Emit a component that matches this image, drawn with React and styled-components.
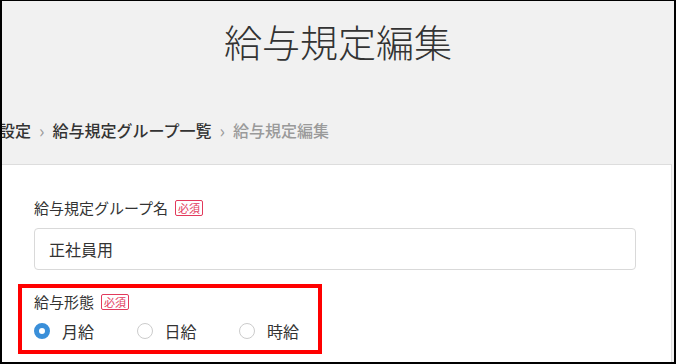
import React from 'react';
import styled, { createGlobalStyle } from 'styled-components';

const GlobalStyle = createGlobalStyle`
  * {
    box-sizing: border-box;
  }

  body {
    margin: 0;
    font-family: "Noto Sans CJK JP", "Noto Sans", sans-serif;
    color: #333333;
  }
`;

const Frame = styled.div`
  width: 676px;
  height: 364px;
  overflow: hidden;
  border-style: solid;
  border-color: #000000;
  border-width: 1px 2px 2px 2px;
  background-color: #f1f1f1;
`;

const Header = styled.header`
  padding: 16px 0 22px;
`;

const Title = styled.h1`
  margin: 0;
  font-size: 38px;
  line-height: 48px;
  font-weight: 300;
  text-align: center;
  color: #333333;
`;

const Breadcrumb = styled.nav`
  display: flex;
  align-items: center;
  gap: 8px;
  margin: 53px 0 0 -3px;
  font-size: 16px;
  line-height: 24px;
  font-weight: 500;
  white-space: nowrap;
`;

const Crumb = styled.span`
  color: ${(props) => (props.current ? '#9a9a9a' : '#333333')};
`;

const Separator = styled.span`
  color: #9a9a9a;
  font-size: 18px;
  font-weight: 400;
`;

const Card = styled.section`
  margin: 0 2px 0 -20px;
  padding: 33px 35px 0 52px;
  height: 240px;
  background-color: #ffffff;
  border-top: 1px solid #dddddd;
  border-right: 1px solid #dddddd;
`;

const Label = styled.div`
  display: flex;
  align-items: center;
  gap: 7px;
  font-size: 15px;
  line-height: 20px;
  color: #333333;
`;

const RequiredBadge = styled.span`
  display: inline-flex;
  align-items: center;
  height: 16px;
  padding: 0 2px;
  border: 1px solid #e23a5c;
  border-radius: 2px;
  color: #e23a5c;
  font-size: 11px;
  line-height: 1;
`;

const TextInput = styled.div`
  display: flex;
  align-items: center;
  height: 42px;
  margin-top: 10px;
  padding-left: 14px;
  border: 1px solid #d9d9d9;
  border-radius: 4px;
  font-size: 16px;
  color: #333333;
`;

const Highlight = styled.div`
  width: 304px;
  margin: 14px 0 0 -16px;
  padding: 4px 0 9px 12px;
  border: 4px solid #ff0000;
`;

const RadioRow = styled.div`
  display: flex;
  margin-top: 9px;
`;

const RadioItem = styled.label`
  display: flex;
  align-items: center;
  gap: 12px;
  flex: 0 0 ${(props) => (props.last ? 'auto' : '102.5px')};
  height: 20px;
  font-size: 16px;
  color: #333333;
`;

const RadioCircle = styled.span`
  width: 16px;
  height: 16px;
  border-radius: 50%;
  flex-shrink: 0;
  background-color: #ffffff;
  border: ${(props) => (props.checked ? '5px solid #3a8fd9' : '1px solid #cccccc')};
`;

const payTypes = [
  { id: 'monthly', label: '月給', checked: true },
  { id: 'daily', label: '日給', checked: false },
  { id: 'hourly', label: '時給', checked: false },
];

const App = () => (
  <>
    <GlobalStyle />
    <Frame>
      <Header>
        <Title>給与規定編集</Title>
        <Breadcrumb>
          <Crumb>設定</Crumb>
          <Separator>›</Separator>
          <Crumb>給与規定グループ一覧</Crumb>
          <Separator>›</Separator>
          <Crumb current>給与規定編集</Crumb>
        </Breadcrumb>
      </Header>
      <Card>
        <Label>
          給与規定グループ名
          <RequiredBadge>必須</RequiredBadge>
        </Label>
        <TextInput>正社員用</TextInput>
        <Highlight>
          <Label>
            給与形態
            <RequiredBadge>必須</RequiredBadge>
          </Label>
          <RadioRow>
            {payTypes.map((type, index) => (
              <RadioItem key={type.id} last={index === payTypes.length - 1}>
                <RadioCircle checked={type.checked} />
                {type.label}
              </RadioItem>
            ))}
          </RadioRow>
        </Highlight>
      </Card>
    </Frame>
  </>
);

export default App;
